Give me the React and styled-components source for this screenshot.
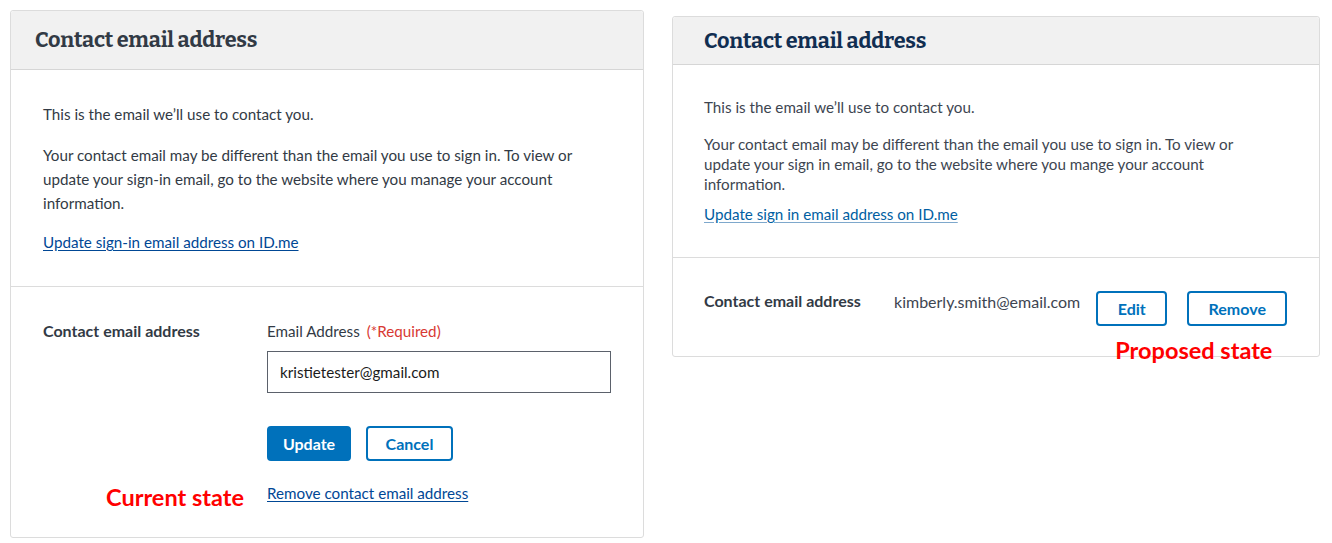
import styled, { createGlobalStyle } from 'styled-components';

const GlobalStyle = createGlobalStyle`
  html, body {
    margin: 0;
    background: #fff;
  }
  body {
    font-family: "Source Sans Pro", Lato, "Open Sans", sans-serif;
    color: #323a45;
  }
  p {
    margin: 0;
  }
`;

const Page = styled.div`
  display: flex;
  align-items: flex-start;
  gap: 28px;
  padding: 10px 12px 0 10px;
`;

const Card = styled.section`
  position: relative;
  box-sizing: border-box;
  width: ${p => p.width}px;
  margin-top: ${p => p.offset || 0}px;
  border: 1px solid #dcdcdc;
  border-radius: 3px;
  background: #fff;
`;

const CardHeader = styled.header`
  display: flex;
  align-items: center;
  box-sizing: border-box;
  height: ${p => p.height}px;
  padding-left: ${p => p.indent}px;
  background: #f1f1f1;
  border-bottom: 1px solid #d6d6d6;
  border-radius: 3px 3px 0 0;

  h2 {
    margin: 0;
    font-family: Bitter, "DejaVu Serif", serif;
    font-size: 21.6px;
    font-weight: 700;
    letter-spacing: -0.2px;
    color: ${p => p.color};
  }
`;

const CardSection = styled.div`
  padding: ${p => p.pad};
  border-top: ${p => (p.divided ? '1px solid #dcdcdc' : 'none')};
  font-size: 15.2px;
  line-height: ${p => p.lh}px;
  color: ${p => p.color || '#323a45'};

  p {
    max-width: ${p => p.measure || 'none'};
  }
  p + p {
    margin-top: ${p => p.gap}px;
  }
`;

const TextLink = styled.a`
  display: block;
  margin-top: ${p => p.gap}px;
  color: ${p => p.color};
  text-decoration: underline;
  text-decoration-color: ${p => p.line || p.color};
  text-underline-offset: 2px;
  cursor: pointer;
`;

const EditGrid = styled.div`
  display: grid;
  grid-template-columns: 224px 344px;
  align-items: start;
`;

const FieldLabel = styled.strong`
  font-size: 16px;
  font-weight: 700;
  color: #323a45;
`;

const FormCol = styled.div`
  display: flex;
  flex-direction: column;
`;

const InputLabel = styled.label`
  color: #323a45;

  span {
    color: #d83933;
    margin-left: 7px;
  }
`;

const TextInput = styled.input`
  box-sizing: border-box;
  width: 344px;
  height: 42px;
  margin-top: 8px;
  padding: 0 12px;
  border: 1px solid #5b616b;
  border-radius: 0;
  font-family: inherit;
  font-size: 15.2px;
  color: #1b1b1b;
  outline: none;
`;

const ButtonRow = styled.div`
  display: flex;
  gap: ${p => p.gap}px;
  margin-top: ${p => p.top || 0}px;
`;

const Button = styled.button`
  box-sizing: border-box;
  height: 35px;
  width: ${p => p.width}px;
  border-radius: 4px;
  border: 2px solid #0071bb;
  background: ${p => (p.primary ? '#0071bb' : '#fff')};
  color: ${p => (p.primary ? '#fff' : '#0071bb')};
  font-family: inherit;
  font-size: 16px;
  font-weight: 700;
  cursor: pointer;
`;

const Annotation = styled.div`
  color: #f00;
  font-family: "Source Sans Pro", Lato, "Open Sans", sans-serif;
  font-size: 23.5px;
  font-weight: 700;
  line-height: 16px;
`;

const CurrentNote = styled(Annotation)`
  justify-self: end;
  margin-right: 23px;
  margin-top: 28px;
`;

const ViewRow = styled.div`
  display: flex;
  align-items: flex-start;
`;

const ViewLabel = styled(FieldLabel)`
  width: 190px;
  flex: none;
  line-height: 20px;
`;

const ViewValue = styled.span`
  margin-right: 16px;
  line-height: 22px;
  font-size: 16px;
  color: #3d4551;
`;

const ViewActions = styled.div`
  position: relative;
`;

const ProposedNote = styled(Annotation)`
  position: absolute;
  left: 19px;
  top: 51px;
  white-space: nowrap;
`;

export default function App() {
  return (
    <>
      <GlobalStyle />
      <Page>
        <Card width={634}>
          <CardHeader height={59} indent={24} color="#323a45">
            <h2>Contact email address</h2>
          </CardHeader>
          <CardSection pad="32px 32px 32px 32px" lh={24} gap={17}>
            <p>This is the email we’ll use to contact you.</p>
            <p>
              Your contact email may be different than the email you use to sign in. To view or
              update your sign-in email, go to the website where you manage your account
              information.
            </p>
            <TextLink gap={15} color="#004795">
              Update sign-in email address on ID.me
            </TextLink>
          </CardSection>
          <CardSection divided pad="32px 32px 32px 32px" lh={24}>
            <EditGrid>
              <FieldLabel>Contact email address</FieldLabel>
              <FormCol>
                <InputLabel>
                  Email Address<span>(*Required)</span>
                </InputLabel>
                <TextInput defaultValue="kristietester@gmail.com" />
                <ButtonRow gap={15} top={33}>
                  <Button primary width={84}>Update</Button>
                  <Button width={87}>Cancel</Button>
                </ButtonRow>
              </FormCol>
              <CurrentNote>Current state</CurrentNote>
              <TextLink gap={20} color="#004795">
                Remove contact email address
              </TextLink>
            </EditGrid>
          </CardSection>
        </Card>

        <Card width={648} offset={6}>
          <CardHeader height={48} indent={31} color="#112e51">
            <h2>Contact email address</h2>
          </CardHeader>
          <CardSection
            pad="32px 32px 33px 31px"
            lh={20}
            gap={17}
            color="#3d4551"
            measure="535px"
          >
            <p>This is the email we’ll use to contact you.</p>
            <p>
              Your contact email may be different than the email you use to sign in. To view or
              update your sign in email, go to the website where you mange your account
              information.
            </p>
            <TextLink gap={10} color="#005ea2" line="#7ea8cc">
              Update sign in email address on ID.me
            </TextLink>
          </CardSection>
          <CardSection divided pad="33px 32px 30px 31px" lh={20}>
            <ViewRow>
              <ViewLabel>Contact email address</ViewLabel>
              <ViewValue>kimberly.smith@email.com</ViewValue>
              <ViewActions>
                <ButtonRow gap={20}>
                  <Button width={71}>Edit</Button>
                  <Button width={100}>Remove</Button>
                </ButtonRow>
                <ProposedNote>Proposed state</ProposedNote>
              </ViewActions>
            </ViewRow>
          </CardSection>
        </Card>
      </Page>
    </>
  );
}
